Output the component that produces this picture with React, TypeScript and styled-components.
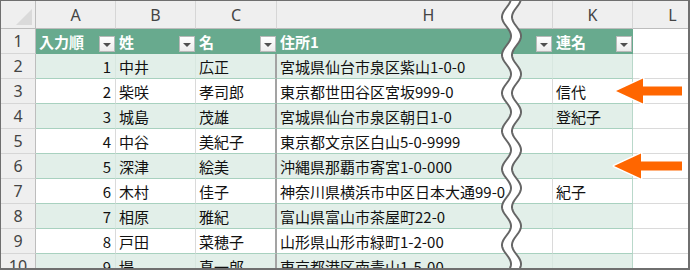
import React from "react";
import styled, { createGlobalStyle, css } from "styled-components";

const Global = createGlobalStyle`
  html, body { margin: 0; padding: 0; background: #fff; }
  body { font-family: "Noto Sans CJK JP", "Noto Sans", sans-serif; }
`;

const Frame = styled.div`
  position: relative;
  width: 690px;
  height: 270px;
  box-sizing: border-box;
  border-style: solid;
  border-color: #6f6f6f;
  border-width: 1px 2px 2px 1px;
  overflow: hidden;
  background: #fff;
`;

const Grid = styled.div`
  display: grid;
  grid-template-columns: 35px 80px 80px 81px 276px 80px 80px;
  grid-template-rows: 28px;
  grid-auto-rows: 25px;
  width: max-content;
`;

const ColHead = styled.div<{ $shift?: number }>`
  box-sizing: border-box;
  background: #efefef;
  border-right: 1px solid #d6d6d6;
  border-bottom: 1px solid #bdbdbd;
  color: #444;
  font-family: "Noto Sans", "Open Sans", sans-serif;
  font-size: 16px;
  display: flex;
  align-items: center;
  justify-content: center;
  padding-left: ${(p) => (p.$shift ? p.$shift * 2 : 0)}px;
`;

const Corner = styled.div`
  position: relative;
  box-sizing: border-box;
  background: #efefef;
  border-right: 1px solid #bdbdbd;
  border-bottom: 1px solid #bdbdbd;
  &::after {
    content: "";
    position: absolute;
    right: 3px;
    bottom: 3px;
    width: 16px;
    height: 16px;
    background: #dadada;
    clip-path: polygon(100% 0, 100% 100%, 0 100%);
  }
`;

const RowHead = styled.div`
  box-sizing: border-box;
  background: #efefef;
  border-right: 1px solid #bdbdbd;
  border-bottom: 1px solid #d6d6d6;
  color: #444;
  font-family: "Noto Sans", "Open Sans", sans-serif;
  font-size: 16px;
  display: flex;
  align-items: center;
  justify-content: center;
`;

type Band = "head" | "green" | "white" | "plain";

const bandStyles: Record<Band, ReturnType<typeof css>> = {
  head: css`
    background: #68aa8e;
    color: #fff;
    font-weight: 700;
    border-bottom: 1px solid #68aa8e;
    border-right-color: #68aa8e;
  `,
  green: css`
    background: #e2efe9;
    border-bottom: 1px solid #a8d1bf;
    border-right-color: #d8e7e0;
  `,
  white: css`
    background: #fff;
    border-bottom: 1px solid #a8d1bf;
    border-right-color: #dadada;
  `,
  plain: css`
    background: #fff;
    border-bottom: 1px solid #dadada;
    border-right-color: #dadada;
  `,
};

const Cell = styled.div<{ $band: Band; $num?: boolean; $cut?: boolean; $edge?: boolean }>`
  box-sizing: border-box;
  border-right: 1px solid transparent;
  font-size: 15px;
  color: #111;
  white-space: nowrap;
  overflow: hidden;
  display: flex;
  align-items: center;
  justify-content: ${(p) => (p.$num ? "flex-end" : "space-between")};
  padding: ${(p) => (p.$num ? "0 4px 0 0" : "0 0 0 3px")};
  ${(p) => bandStyles[p.$band]}
  ${(p) => p.$cut && css`border-right: 2px solid #a3a3a3;`}
  ${(p) => p.$edge && p.$band !== "head" && css`border-right-color: #b9d8ca;`}
`;

const FilterBtn = styled.span`
  flex: none;
  align-self: flex-end;
  margin-bottom: 1px;
  box-sizing: border-box;
  width: 16px;
  height: 16px;
  border: 1px solid #b9b9b9;
  background: linear-gradient(#ffffff, #ececec);
  display: flex;
  align-items: center;
  justify-content: center;
  &::after {
    content: "";
    margin-top: 2px;
    border-left: 4px solid transparent;
    border-right: 4px solid transparent;
    border-top: 4px solid #505050;
  }
`;

const Overlay = styled.svg`
  position: absolute;
  top: -1px;
  left: -1px;
  width: 690px;
  height: 270px;
  pointer-events: none;
`;

const rows = [
  { n: 2, a: "1", b: "中井", c: "広正", h: "宮城県仙台市泉区紫山1-0-0", k: "" },
  { n: 3, a: "2", b: "柴咲", c: "孝司郎", h: "東京都世田谷区宮坂999-0", k: "信代" },
  { n: 4, a: "3", b: "城島", c: "茂雄", h: "宮城県仙台市泉区朝日1-0", k: "登紀子" },
  { n: 5, a: "4", b: "中谷", c: "美紀子", h: "東京都文京区白山5-0-9999", k: "" },
  { n: 6, a: "5", b: "深津", c: "絵美", h: "沖縄県那覇市寄宮1-0-000", k: "" },
  { n: 7, a: "6", b: "木村", c: "佳子", h: "神奈川県横浜市中区日本大通99-0", k: "紀子" },
  { n: 8, a: "7", b: "相原", c: "雅紀", h: "富山県富山市茶屋町22-0", k: "" },
  { n: 9, a: "8", b: "戸田", c: "菜穂子", h: "山形県山形市緑町1-2-00", k: "" },
  { n: 10, a: "9", b: "堤", c: "真一郎", h: "東京都港区南青山1-5-00", k: "" },
];

function wavePoints(c: number): [number, number][] {
  const pts: [number, number][] = [];
  for (let y = -4; y <= 274; y += 1) {
    pts.push([c - 4.5 * Math.sin((2 * Math.PI * (y - 7.5)) / 38), y]);
  }
  return pts;
}

const toPath = (pts: [number, number][]) =>
  pts.map((p, i) => `${i ? "L" : "M"}${p[0].toFixed(2)} ${p[1]}`).join(" ");

function Wave() {
  const left = wavePoints(506.5);
  const right = wavePoints(516.5);
  const fill = toPath([...left, ...right.slice().reverse()]) + " Z";
  return (
    <g>
      <path d={fill} fill="#fff" />
      <path d={toPath(left)} fill="none" stroke="#666" strokeWidth={2} />
      <path d={toPath(right)} fill="none" stroke="#666" strokeWidth={2} />
    </g>
  );
}

function Arrow({ tip, y }: { tip: number; y: number }) {
  const hb = tip + 27;
  const d = `M${tip} ${y} L${hb} ${y - 12.5} L${hb} ${y - 4.5} L682 ${y - 4.5} L682 ${y + 4.5} L${hb} ${y + 4.5} L${hb} ${y + 12.5} Z`;
  return (
    <path
      d={d}
      fill="#ff6600"
      stroke="#fff"
      strokeWidth={3}
      strokeLinejoin="round"
      style={{ paintOrder: "stroke" }}
    />
  );
}

export default function App() {
  return (
    <>
      <Global />
      <Frame>
        <Grid>
          <Corner />
          <ColHead>A</ColHead>
          <ColHead>B</ColHead>
          <ColHead>C</ColHead>
          <ColHead $shift={14}>H</ColHead>
          <ColHead>K</ColHead>
          <ColHead>L</ColHead>

          <RowHead>1</RowHead>
          <Cell $band="head">
            入力順
            <FilterBtn />
          </Cell>
          <Cell $band="head">
            姓
            <FilterBtn />
          </Cell>
          <Cell $band="head">
            名
            <FilterBtn />
          </Cell>
          <Cell $band="head">
            住所1
            <FilterBtn />
          </Cell>
          <Cell $band="head">
            連名
            <FilterBtn />
          </Cell>
          <Cell $band="plain" />

          {rows.map((r) => {
            const band: Band = r.n % 2 === 0 ? "green" : "white";
            return (
              <React.Fragment key={r.n}>
                <RowHead>{r.n}</RowHead>
                <Cell $band={band} $num>
                  {r.a}
                </Cell>
                <Cell $band={band}>{r.b}</Cell>
                <Cell $band={band} $cut>
                  {r.c}
                </Cell>
                <Cell $band={band}>{r.h}</Cell>
                <Cell $band={band} $edge>
                  {r.k}
                </Cell>
                <Cell $band="plain" />
              </React.Fragment>
            );
          })}
        </Grid>
        <Overlay viewBox="0 0 690 270">
          <Wave />
          <Arrow tip={616} y={91} />
          <Arrow tip={614} y={166} />
        </Overlay>
      </Frame>
    </>
  );
}
